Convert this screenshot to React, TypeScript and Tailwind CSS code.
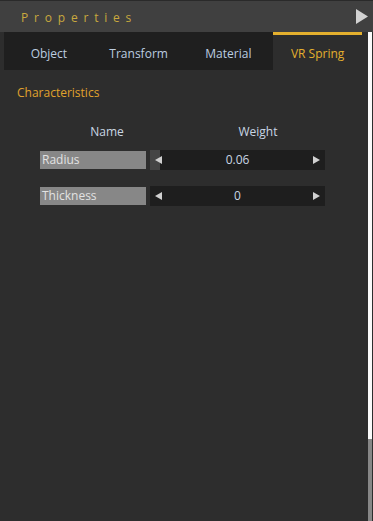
import React from "react";

const font = { fontFamily: '"Open Sans", "Noto Sans", sans-serif' };

function Slider({ value, fill }: { value: string; fill?: boolean }) {
  return (
    <div className="relative flex h-[20px] w-[175px] items-center bg-[#1e1e1e]">
      {fill && <div className="absolute left-0 top-0 h-full w-[10px] bg-[#454545]" />}
      <svg className="absolute left-[5px] top-[6px]" width="7" height="8" viewBox="0 0 7 8">
        <polygon points="7,0 7,8 0,4" fill="#d0d0d0" />
      </svg>
      <div className="flex-1 text-center text-[12px] text-[#c9d6e4]">{value}</div>
      <svg className="absolute right-[5px] top-[6px]" width="7" height="8" viewBox="0 0 7 8">
        <polygon points="0,0 0,8 7,4" fill="#d0d0d0" />
      </svg>
    </div>
  );
}

export default function App() {
  const tabs = ["Object", "Transform", "Material", "VR Spring"];
  return (
    <div className="flex h-[521px] w-[373px] flex-col overflow-hidden bg-[#2d2d2d]" style={font}>
      <div className="flex h-[32px] items-center justify-between border-t border-[#2a2a2a] bg-[#404040] pl-[21px] pr-[5px]">
        <span className="pt-[2px] text-[12px] tracking-[5.8px] text-[#c9a93e]">Properties</span>
        <svg width="12" height="15" viewBox="0 0 12 15">
          <polygon points="0,0 12,7.5 0,15" fill="#d2d2d2" />
        </svg>
      </div>
      <div className="flex flex-1">
        <div className="w-[362px] pl-[4px]">
          <div className="flex h-[38px] bg-[#1f1f1f]">
            {tabs.map((t, i) => {
              const active = i === 3;
              return (
                <div
                  key={t}
                  className={
                    active
                      ? "flex w-[89px] items-center justify-center border-t-[3px] border-[#e4b02e] bg-[#2d2d2d] pt-[2px] text-[12px] text-[#e4b02e]"
                      : "flex w-[90px] items-center justify-center pt-[5px] text-[12px] text-[#bccde0]"
                  }
                >
                  {t}
                </div>
              );
            })}
          </div>
          <div className="pl-[13px] pt-[14px] text-[12px] text-[#e0a22c]">Characteristics</div>
          <div className="mt-[21px] flex text-[12px] text-[#c9d6e4]">
            <div className="w-[206px] text-center">Name</div>
            <div className="w-[96px] text-center">Weight</div>
          </div>
          <div className="mt-[9px] flex flex-col gap-[16px] pl-[36px]">
            <div className="flex items-center gap-[4px]">
              <div className="flex h-[18px] w-[106px] items-center bg-[#878787] pl-[2px] text-[12px] text-[#e2e2e2]">
                Radius
              </div>
              <Slider value="0.06" fill />
            </div>
            <div className="flex items-center gap-[4px]">
              <div className="flex h-[18px] w-[106px] items-center bg-[#878787] pl-[2px] text-[12px] text-[#e2e2e2]">
                Thickness
              </div>
              <Slider value="0" />
            </div>
          </div>
        </div>
        <div className="flex w-[11px] flex-col pl-[6px] pr-[1px]">
          <div className="h-[407px] bg-[#fafafa]" />
          <div className="flex-1 bg-[#878787]" />
        </div>
      </div>
    </div>
  );
}
